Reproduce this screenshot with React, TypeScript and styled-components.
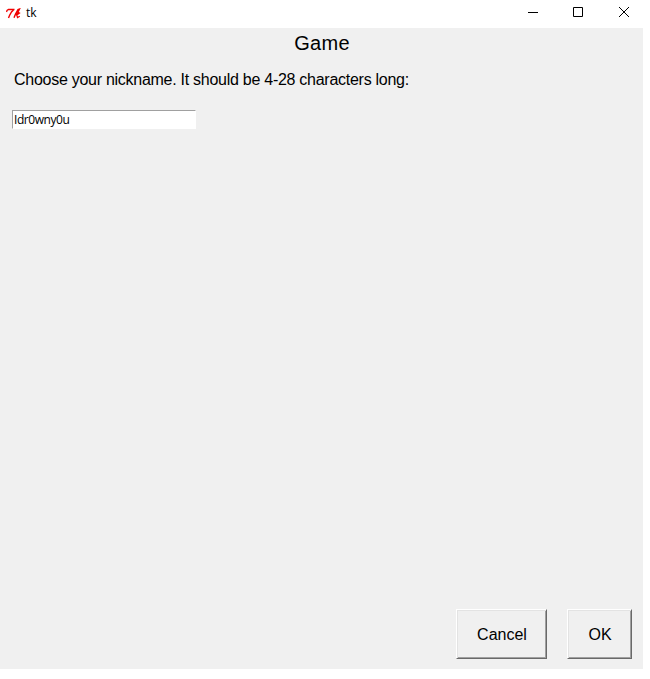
import React, { useState } from 'react';
import styled, { createGlobalStyle } from 'styled-components';

const GlobalStyle = createGlobalStyle`
  * { box-sizing: border-box; }
  body { margin: 0; background: #fff; color: #000; }
`;

const Window = styled.div`
  display: flex;
  flex-direction: column;
  width: 643px;
  height: 669px;
  background: #f0f0f0;
  font-family: "Liberation Sans", Arial, sans-serif;
`;

const TitleBar = styled.header`
  display: flex;
  align-items: center;
  height: 28px;
  padding-left: 6px;
  background: #fff;
`;

const WindowTitle = styled.span`
  flex: 1;
  margin: -2px 0 0 5px;
  font: 12px/16px "Open Sans", "Segoe UI", sans-serif;
`;

const Controls = styled.div`
  display: flex;
  height: 28px;
  margin-right: -4px;
`;

const ControlButton = styled.button<{ $width: number }>`
  display: grid;
  place-items: center;
  width: ${({ $width }) => $width}px;
  padding: 0 0 4px;
  border: 0;
  background: transparent;
`;

const Body = styled.main`
  display: flex;
  flex: 1;
  flex-direction: column;
  align-items: flex-start;
  padding: 0 11px 10px 12px;
`;

const Heading = styled.h1`
  align-self: center;
  margin: 3px 0 0;
  font-size: 20px;
  font-weight: 400;
  line-height: 24px;
  letter-spacing: 0.3px;
`;

const Prompt = styled.label`
  margin: 15px 0 0 2px;
  font-size: 16px;
  line-height: 20px;
  letter-spacing: -0.27px;
  white-space: nowrap;
`;

const Entry = styled.input`
  width: 184px;
  height: 19px;
  margin-top: 20px;
  padding: 0 1px;
  border: 1px solid #fff;
  border-top-color: #a0a0a0;
  border-left-color: #a0a0a0;
  border-radius: 0;
  outline: 0;
  background: #fff;
  color: #000;
  font: 12px/16px "Open Sans", "Segoe UI", sans-serif;
  letter-spacing: -0.45px;
`;

const Actions = styled.footer`
  display: flex;
  align-self: flex-end;
  gap: 20px;
  margin-top: auto;
`;

const ActionButton = styled.button<{ $width: number }>`
  width: ${({ $width }) => $width}px;
  height: 50px;
  padding: 2px 0 0 1px;
  border: 1px solid;
  border-color: #fff #696969 #696969 #fff;
  border-radius: 0;
  background: #f0f0f0;
  box-shadow: inset 1px 1px #e3e3e3, inset -1px -1px #a0a0a0;
  color: #000;
  font: 16px/20px "Liberation Sans", Arial, sans-serif;
`;

const TkLogo = () => (
  <svg width="15" height="12" viewBox="0 0 15 12" fill="none" stroke="#f00000">
    <path d="M.5 4 1 2.5 2.5 1.5H8.5" strokeWidth="1.3" />
    <path d="M7.5 2 5.5 4 3.5 7.5 2.5 10" strokeWidth="1.4" />
    <path d="M8 9.8 9.5 6 12 1.5 13.5 1 12.5 3 9.5 6" strokeWidth="1.4" />
    <path d="M9.5 7 12.5 4.5 13.5 5 10.8 7 11.5 9.5 13.8 8.2" strokeWidth="1.2" />
  </svg>
);

const ControlIcon = ({ d }: { d: string }) => (
  <svg width="11" height="11" viewBox="0 0 11 11" fill="none" stroke="#000">
    <path d={d} />
  </svg>
);

export default function App() {
  const [nickname, setNickname] = useState('Idr0wny0u');
  return (
    <>
      <GlobalStyle />
      <Window>
        <TitleBar>
          <TkLogo />
          <WindowTitle>tk</WindowTitle>
          <Controls>
            <ControlButton $width={43} aria-label="Minimize"><ControlIcon d="M0 5.5H10" /></ControlButton>
            <ControlButton $width={47} aria-label="Maximize"><ControlIcon d="M.5.5H9.5V9.5H.5Z" /></ControlButton>
            <ControlButton $width={45} aria-label="Close"><ControlIcon d="M0 0 10 10M10 0 0 10" /></ControlButton>
          </Controls>
        </TitleBar>
        <Body>
          <Heading>Game</Heading>
          <Prompt htmlFor="nickname">Choose your nickname. It should be 4-28 characters long:</Prompt>
          <Entry id="nickname" value={nickname} onChange={(e) => setNickname(e.target.value)} />
          <Actions>
            <ActionButton $width={91}>Cancel</ActionButton>
            <ActionButton $width={65}>OK</ActionButton>
          </Actions>
        </Body>
      </Window>
    </>
  );
}
